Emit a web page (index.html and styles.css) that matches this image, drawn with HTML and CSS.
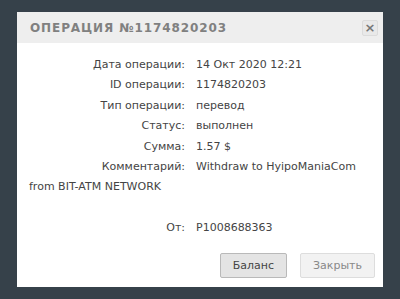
FILE: index.html
```html
<!DOCTYPE html>
<html lang="ru">

<head>
    <meta charset="UTF-8">
    <meta name="viewport" content="width=device-width, initial-scale=1.0">
    <title>Операция №1174820203</title>
    <link rel="stylesheet" href="styles.css">
</head>

<body>
    <div class="dialog">
        <div class="dialog-head">
            <span class="dialog-title">Операция №1174820203</span>
            <button type="button" class="dialog-close">&times;</button>
        </div>
        <div class="dialog-body">
            <div class="row"><span class="label">Дата операции:</span>14 Окт 2020 12:21</div>
            <div class="row"><span class="label">ID операции:</span>1174820203</div>
            <div class="row"><span class="label">Тип операции:</span>перевод</div>
            <div class="row"><span class="label">Статус:</span>выполнен</div>
            <div class="row"><span class="label">Сумма:</span>1.57 $</div>
            <div class="row"><span class="label">Комментарий:</span>Withdraw to HyipoManiaCom from BIT-ATM NETWORK</div>
            <div class="row">&nbsp;</div>
            <div class="row"><span class="label">От:</span>P1008688363</div>
        </div>
        <div class="dialog-foot">
            <button type="button" class="btn btn-main">Баланс</button>
            <button type="button" class="btn">Закрыть</button>
        </div>
    </div>
</body>

</html>
```

FILE: styles.css
```css
body {
    font-family: 'DejaVu Sans', sans-serif;
    margin: 0;
    padding: 12px 17px;
    background-color: #36414a;
    color: #444;
}
.dialog {
    background-color: #fff;
    height: 275px;
    display: flex;
    flex-direction: column;
}
.dialog-head {
    background-color: #eeeeee;
    height: 31px;
    display: flex;
    align-items: center;
    justify-content: space-between;
    padding: 0 5px 0 13px;
}
.dialog-title {
    text-transform: uppercase;
    font-size: 12px;
    font-weight: bold;
    letter-spacing: 0.9px;
    color: #808080;
}
.dialog-close {
    width: 16px;
    height: 16px;
    padding: 0;
    border: 1px solid #dcdcdc;
    border-radius: 2px;
    background-color: #e9e9e9;
    color: #777;
    font-family: 'DejaVu Sans', sans-serif;
    font-size: 13px;
    font-weight: bold;
    line-height: 13px;
}
.dialog-body {
    padding: 12px 12px 0;
    font-size: 11px;
    line-height: 20.4px;
    flex: 1;
}
.label {
    display: inline-block;
    width: 156px;
    margin-right: 11px;
    text-align: right;
    vertical-align: top;
}
.dialog-foot {
    display: flex;
    justify-content: flex-end;
    gap: 13px;
    padding: 0 8px 9px;
}
.btn {
    height: 25px;
    padding: 0 12px;
    border: 1px solid #dddddd;
    border-radius: 2px;
    background-color: #f2f2f2;
    color: #888;
    font-family: 'DejaVu Sans', sans-serif;
    font-size: 11px;
}
.btn-main {
    border-color: #b9b9b9;
    background-color: #e4e4e4;
    color: #444;
}
```
